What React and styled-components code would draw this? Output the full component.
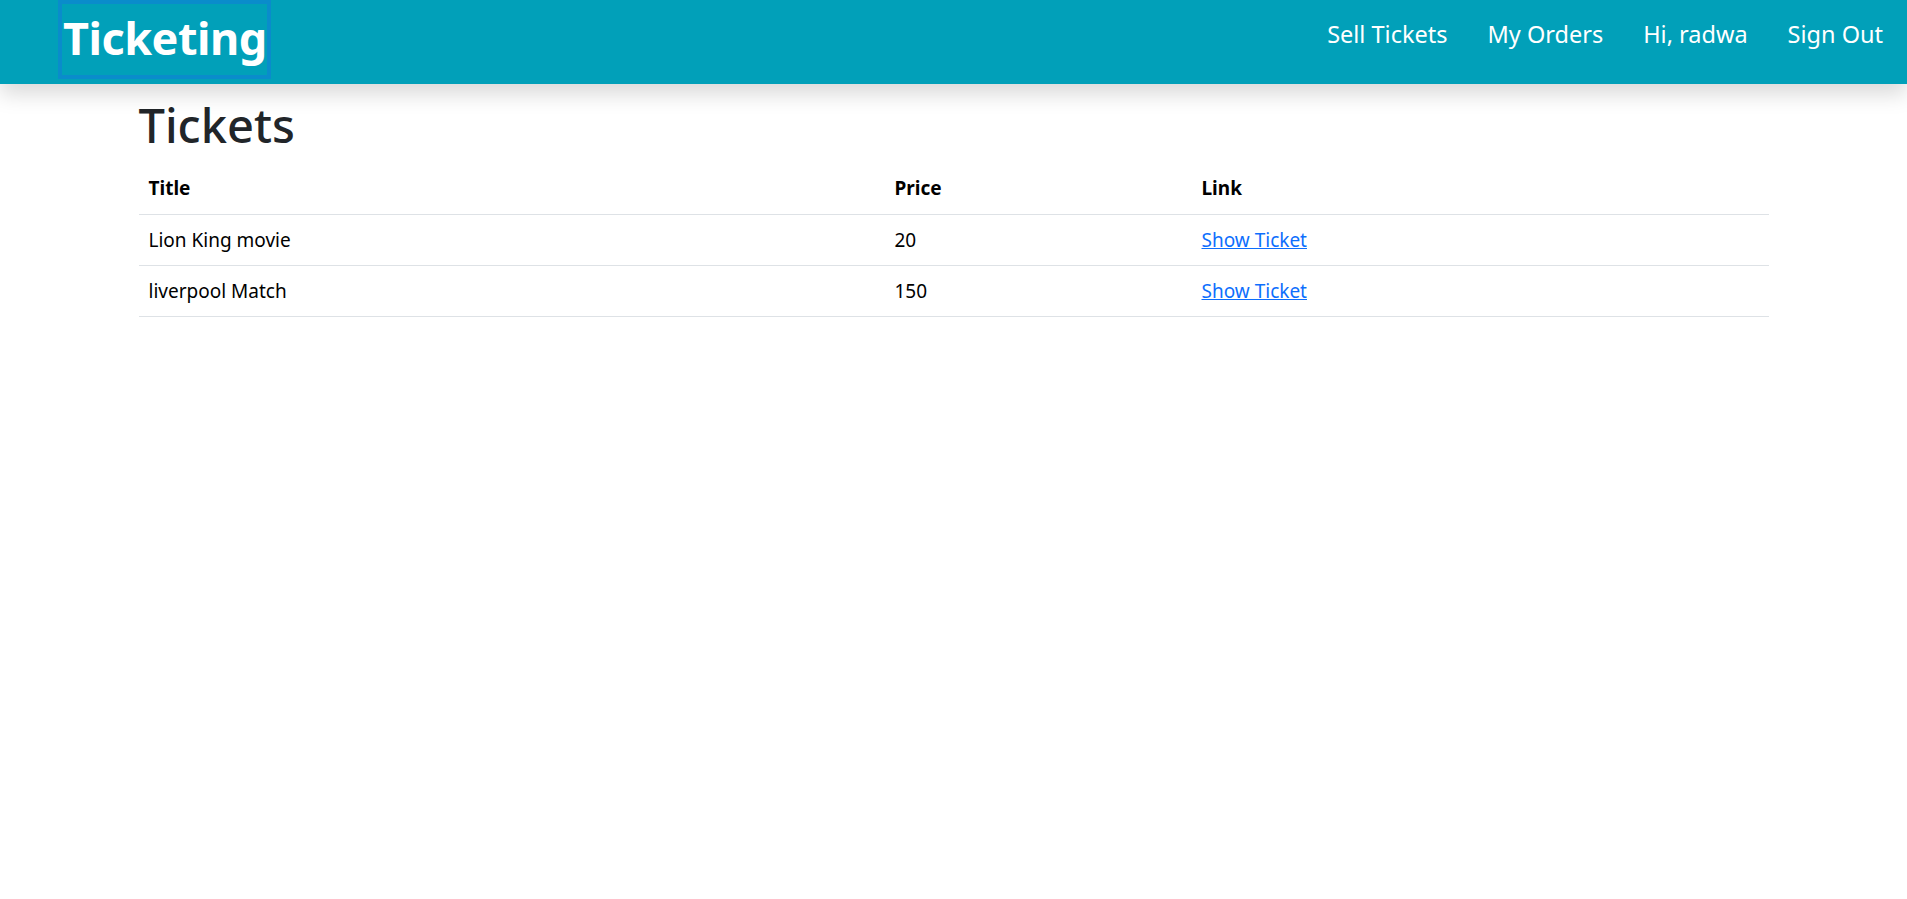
import React from 'react';
import styled, { createGlobalStyle } from 'styled-components';

const GlobalStyle = createGlobalStyle`
  html, body {
    margin: 0;
    padding: 0;
    background: #ffffff;
    font-family: "Noto Sans", "Open Sans", sans-serif;
    color: #212529;
  }
  * { box-sizing: border-box; }
`;

const Header = styled.header`
  height: 84px;
  background: #01a0b9;
  display: flex;
  align-items: flex-start;
  justify-content: space-between;
  padding: 0 24px 0 58px;
  box-shadow: 0 10px 20px rgba(0, 0, 0, 0.15);
  position: relative;
  z-index: 1;
`;

const Brand = styled.a`
  display: flex;
  align-items: center;
  height: 79px;
  padding: 0 0 4px 1px;
  border: 4px solid #0a8ccb;
  color: #ffffff;
  font-weight: 700;
  font-size: 45px;
  text-decoration: none;
  letter-spacing: -0.5px;
`;

const Nav = styled.nav`
  display: flex;
  gap: 40px;
  padding-top: 14px;
`;

const NavLink = styled.a`
  color: #ffffff;
  font-size: 23.5px;
  line-height: 40px;
  text-decoration: none;
`;

const Container = styled.main`
  width: 1630px;
  margin: 0 auto;
  padding-top: 11px;
`;

const Heading = styled.h1`
  margin: 0 0 8px;
  font-size: 47px;
  font-weight: 500;
  line-height: 60px;
  color: #212529;
`;

const Table = styled.table`
  width: 100%;
  border-collapse: collapse;
  color: #000000;
  font-size: 19px;
`;

const Cell = styled.td`
  width: ${p => p.$width || 'auto'};
  padding: 10px;
  height: 51px;
  border-bottom: 1px solid #dee2e6;
  text-align: left;
  font-weight: ${p => (p.$head ? 700 : 400)};
`;

const TicketLink = styled.a`
  color: #0d6efd;
  text-decoration: underline;
`;

const tickets = [
  { id: 1, title: 'Lion King movie', price: 20 },
  { id: 2, title: 'liverpool Match', price: 150 },
];

export default function App() {
  return (
    <>
      <GlobalStyle />
      <Header>
        <Brand href="#">Ticketing</Brand>
        <Nav>
          <NavLink href="#">Sell Tickets</NavLink>
          <NavLink href="#">My Orders</NavLink>
          <NavLink href="#">Hi, radwa</NavLink>
          <NavLink href="#">Sign Out</NavLink>
        </Nav>
      </Header>
      <Container>
        <Heading>Tickets</Heading>
        <Table>
          <thead>
            <tr>
              <Cell as="th" $head $width="746px">Title</Cell>
              <Cell as="th" $head $width="307px">Price</Cell>
              <Cell as="th" $head>Link</Cell>
            </tr>
          </thead>
          <tbody>
            {tickets.map(t => (
              <tr key={t.id}>
                <Cell>{t.title}</Cell>
                <Cell>{t.price}</Cell>
                <Cell>
                  <TicketLink href="#">Show Ticket</TicketLink>
                </Cell>
              </tr>
            ))}
          </tbody>
        </Table>
      </Container>
    </>
  );
}
